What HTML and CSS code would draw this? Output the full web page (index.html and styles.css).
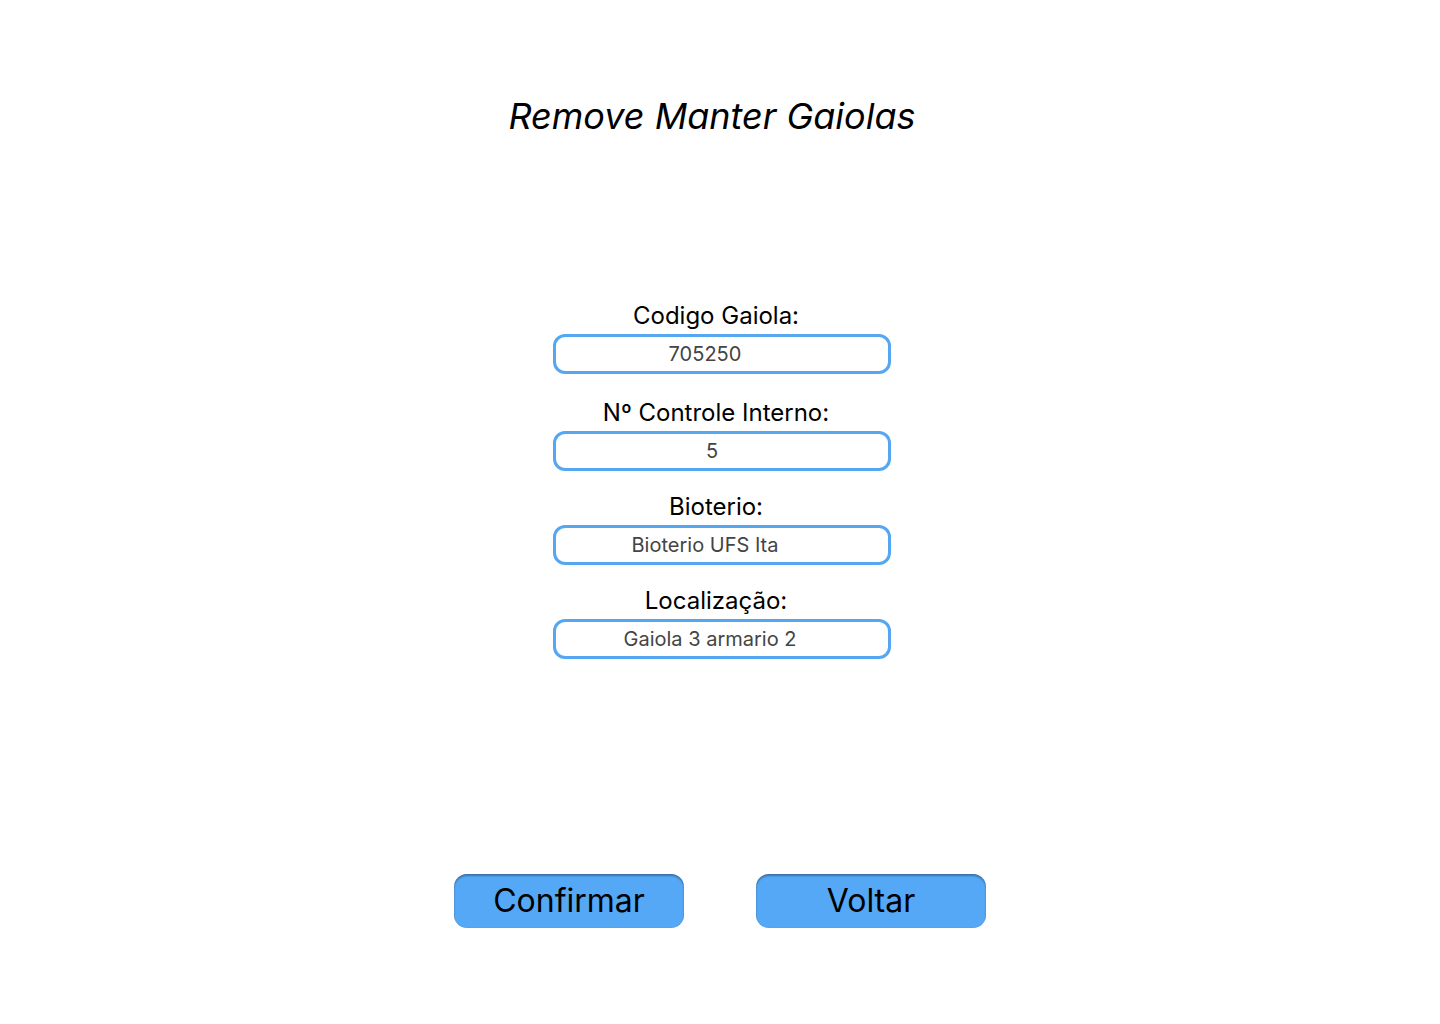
FILE: index.html
```html
<!DOCTYPE html>
<html lang="pt-BR">
<head>
    <meta charset="UTF-8">
    <meta name="viewport" content="width=device-width, initial-scale=1.0">
    <title>Remove Manter Gaiolas</title>
    <link rel="stylesheet" href="styles.css">
</head>
<body>

<div class="page">
    <h1 class="title">Remove Manter Gaiolas</h1>

    <form class="fields">
        <div class="field first">
            <label for="codigo">Codigo Gaiola:</label>
            <input id="codigo" type="text" value="705250" readonly>
        </div>
        <div class="field">
            <label for="controle">Nº Controle Interno:</label>
            <input id="controle" class="short" type="text" value="5" readonly>
        </div>
        <div class="field">
            <label for="bioterio">Bioterio:</label>
            <input id="bioterio" type="text" value="Bioterio UFS Ita" readonly>
        </div>
        <div class="field">
            <label for="local">Localização:</label>
            <input id="local" class="wide" type="text" value="Gaiola 3 armario 2" readonly>
        </div>
    </form>

    <div class="actions">
        <button class="btn" type="button">Confirmar</button>
        <button class="btn" type="button">Voltar</button>
    </div>
</div>

</body>
</html>
```

FILE: styles.css
```css
body {
    margin: 0;
    background-color: #ffffff;
    font-family: Inter, "Noto Sans", sans-serif;
    color: #000000;
}
.page {
    display: flex;
    flex-direction: column;
    align-items: center;
}
.title {
    margin: 94px 0 0 -16px;
    font-size: 36px;
    line-height: 44px;
    font-style: italic;
    font-weight: 400;
}
.fields {
    margin: 164px 0 0 4px;
    display: flex;
    flex-direction: column;
    gap: 22px;
}
.field {
    display: flex;
    flex-direction: column;
    align-items: center;
    gap: 4px;
}
.field.first {
    margin-bottom: 3px;
}
.field label {
    font-size: 24px;
    line-height: 28px;
    margin-left: -12px; /* labels sit a bit left of the box centre */
}
.field input {
    width: 338px;
    height: 40px;
    box-sizing: border-box;
    border: 3px solid #55a7f2;
    border-radius: 12px;
    padding: 0 34px 0 0;
    font-family: inherit;
    font-size: 20px;
    color: #444444;
    text-align: center;
    outline: none;
}
.field input.short {
    padding-right: 20px;
}
.field input.wide {
    padding-right: 24px;
}
.actions {
    margin-top: 215px;
    display: flex;
    gap: 72px;
}
.btn {
    width: 230px;
    height: 54px;
    border: none;
    border-radius: 13px;
    background-color: #55a8f5;
    box-shadow: inset 0 2px 2px rgba(0, 0, 0, 0.3), inset 0 0 1px rgba(0, 0, 0, 0.2);
    font-family: inherit;
    font-size: 32px;
    color: #000000;
    padding: 0 0 2px;
    cursor: pointer;
}
```
